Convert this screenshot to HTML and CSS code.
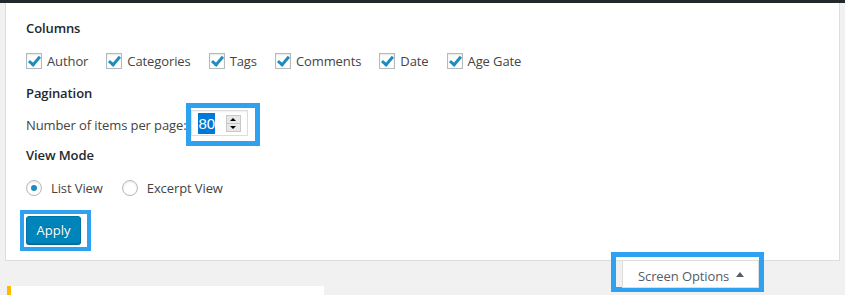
FILE: index.html
```html
<!DOCTYPE html>
<html lang="en">
<head>
    <meta charset="UTF-8">
    <title>Screen Options</title>
    <link rel="stylesheet" href="styles.css">
</head>
<body>
    <div class="admin-bar"></div>
    <div class="wrap">
        <div class="screen-options">
            <fieldset class="group">
                <legend>Columns</legend>
                <div class="checks">
                    <label class="check"><span class="box"></span>Author</label>
                    <label class="check"><span class="box"></span>Categories</label>
                    <label class="check"><span class="box"></span>Tags</label>
                    <label class="check"><span class="box"></span>Comments</label>
                    <label class="check"><span class="box"></span>Date</label>
                    <label class="check"><span class="box"></span>Age Gate</label>
                </div>
            </fieldset>
            <fieldset class="group">
                <legend>Pagination</legend>
                <div class="per-page">
                    <span class="per-page-label">Number of items per page:</span>
                    <span class="highlight hl-input">
                        <span class="number-input">
                            <span class="selected">80</span>
                            <span class="spinner">
                                <span class="spin up"></span>
                                <span class="spin down"></span>
                            </span>
                        </span>
                    </span>
                </div>
            </fieldset>
            <fieldset class="group">
                <legend>View Mode</legend>
                <div class="radios">
                    <label class="radio"><span class="circle checked"></span>List View</label>
                    <label class="radio"><span class="circle"></span>Excerpt View</label>
                </div>
            </fieldset>
            <div class="submit-row">
                <span class="highlight hl-apply">
                    <button class="button-primary">Apply</button>
                </span>
            </div>
        </div>
        <div class="meta-links">
            <span class="highlight hl-tab">
                <span class="tab">Screen Options <span class="arrow"></span></span>
            </span>
        </div>
        <div class="notice"></div>
    </div>
</body>
</html>
```

FILE: styles.css
```css
body {
    margin: 0;
    background-color: #f1f1f1;
    font-family: "Open Sans", sans-serif;
    font-size: 13px;
    letter-spacing: -0.1px;
    color: #444;
    overflow: hidden;
}
.admin-bar {
    height: 3px;
    background-color: #23282d;
}
.wrap {
    padding: 0 5px;
}
.screen-options {
    background-color: #fff;
    border: 1px solid #ddd;
    border-top: none;
    padding: 16px 20px 9px;
}
.group {
    border: none;
    margin: 0;
    padding: 0;
}
legend {
    padding: 0;
    font-weight: 600;
    color: #23282d;
    line-height: 18px;
}
.checks {
    display: flex;
    gap: 18px;
    margin: 15px 0 14px;
}
.check, .radio {
    display: flex;
    align-items: center;
    gap: 5px;
    line-height: 18px;
}
.box {
    width: 14px;
    height: 14px;
    border: 1px solid #b4b9be;
    box-shadow: inset 0 1px 2px rgba(0,0,0,0.1);
    position: relative;
}
.box::after {
    content: "";
    position: absolute;
    left: 4px;
    top: 0px;
    width: 4px;
    height: 9px;
    border: solid #1e8cbe;
    border-width: 0 3px 3px 0;
    transform: rotate(40deg);
}
.per-page {
    display: flex;
    align-items: center;
    margin-top: 1px;
    height: 43px;
}
.highlight {
    border: 5px solid #2ea2f1;
    display: inline-flex;
    box-sizing: border-box;
}
.hl-input {
    margin-left: -1px;
    padding: 2px 7px 5px 0;
    height: 43px;
    width: 74px;
}
.number-input {
    display: flex;
    align-items: center;
    width: 57px;
    height: 26px;
    box-sizing: border-box;
    border: 1px solid #ddd;
    box-shadow: inset 0 1px 2px rgba(0,0,0,0.07);
    padding: 0 6px;
}
.selected {
    background-color: #0078d7;
    color: #fff;
    font-family: "Liberation Sans", sans-serif;
    font-size: 15px;
    letter-spacing: 0;
    line-height: 21px;
    padding: 0 0 0 1px;
    width: 16px;
}
.spinner {
    margin-left: auto;
    display: flex;
    flex-direction: column;
    border: 1px solid #c8c8c8;
    background-color: #e8e8e8;
    width: 13px;
}
.spin {
    height: 7px;
    position: relative;
}
.spin.up {
    border-bottom: 1px solid #c8c8c8;
}
.spin::after {
    content: "";
    position: absolute;
    left: 3px;
    top: 2px;
    border-left: 3px solid transparent;
    border-right: 3px solid transparent;
}
.spin.up::after {
    border-bottom: 3px solid #000;
}
.spin.down::after {
    border-top: 3px solid #000;
}
.radios {
    display: flex;
    gap: 19px;
    margin: 15px 0 13px;
}
.radio {
    gap: 9px;
}
.circle {
    width: 14px;
    height: 14px;
    border: 1px solid #b4b9be;
    border-radius: 50%;
    box-shadow: inset 0 1px 2px rgba(0,0,0,0.1);
    display: flex;
    align-items: center;
    justify-content: center;
}
.circle.checked::after {
    content: "";
    width: 6px;
    height: 6px;
    border-radius: 50%;
    background-color: #1e8cbe;
}
.submit-row {
    margin-left: -6px;
    display: flex;
}
.hl-apply {
    border-width: 4px;
    padding: 2px 6px 2px 2px;
    width: 71px;
    height: 41px;
}
.button-primary {
    background-color: #0085ba;
    border: 1px solid #0073aa;
    border-radius: 3px;
    box-shadow: 0 1px 0 #006799;
    color: #fff;
    font-family: "Open Sans", sans-serif;
    font-size: 13px;
    width: 55px;
    height: 28px;
    padding: 0;
    text-shadow: 0 -1px 1px #006799;
}
.meta-links {
    display: flex;
    justify-content: flex-end;
    padding-right: 76px;
    margin-top: -9px;
    height: 40px;
}
.hl-tab {
    padding: 0 0 0 6px;
    width: 153px;
    height: 40px;
}
.tab {
    background-color: #fff;
    border: 1px solid #ddd;
    border-top: none;
    width: 138px;
    box-sizing: border-box;
    margin-top: 4px;
    color: #555d66;
    display: flex;
    align-items: center;
    gap: 7px;
    padding: 3px 0 0 15px;
    height: 27px;
}
.arrow {
    border-left: 4px solid transparent;
    border-right: 4px solid transparent;
    border-bottom: 5px solid #555d66;
    margin-top: -3px;
}
.notice {
    position: absolute;
    left: 7px;
    top: 286px;
    width: 313px;
    height: 20px;
    background-color: #fff;
    border-left: 4px solid #ffb900;
}
```
